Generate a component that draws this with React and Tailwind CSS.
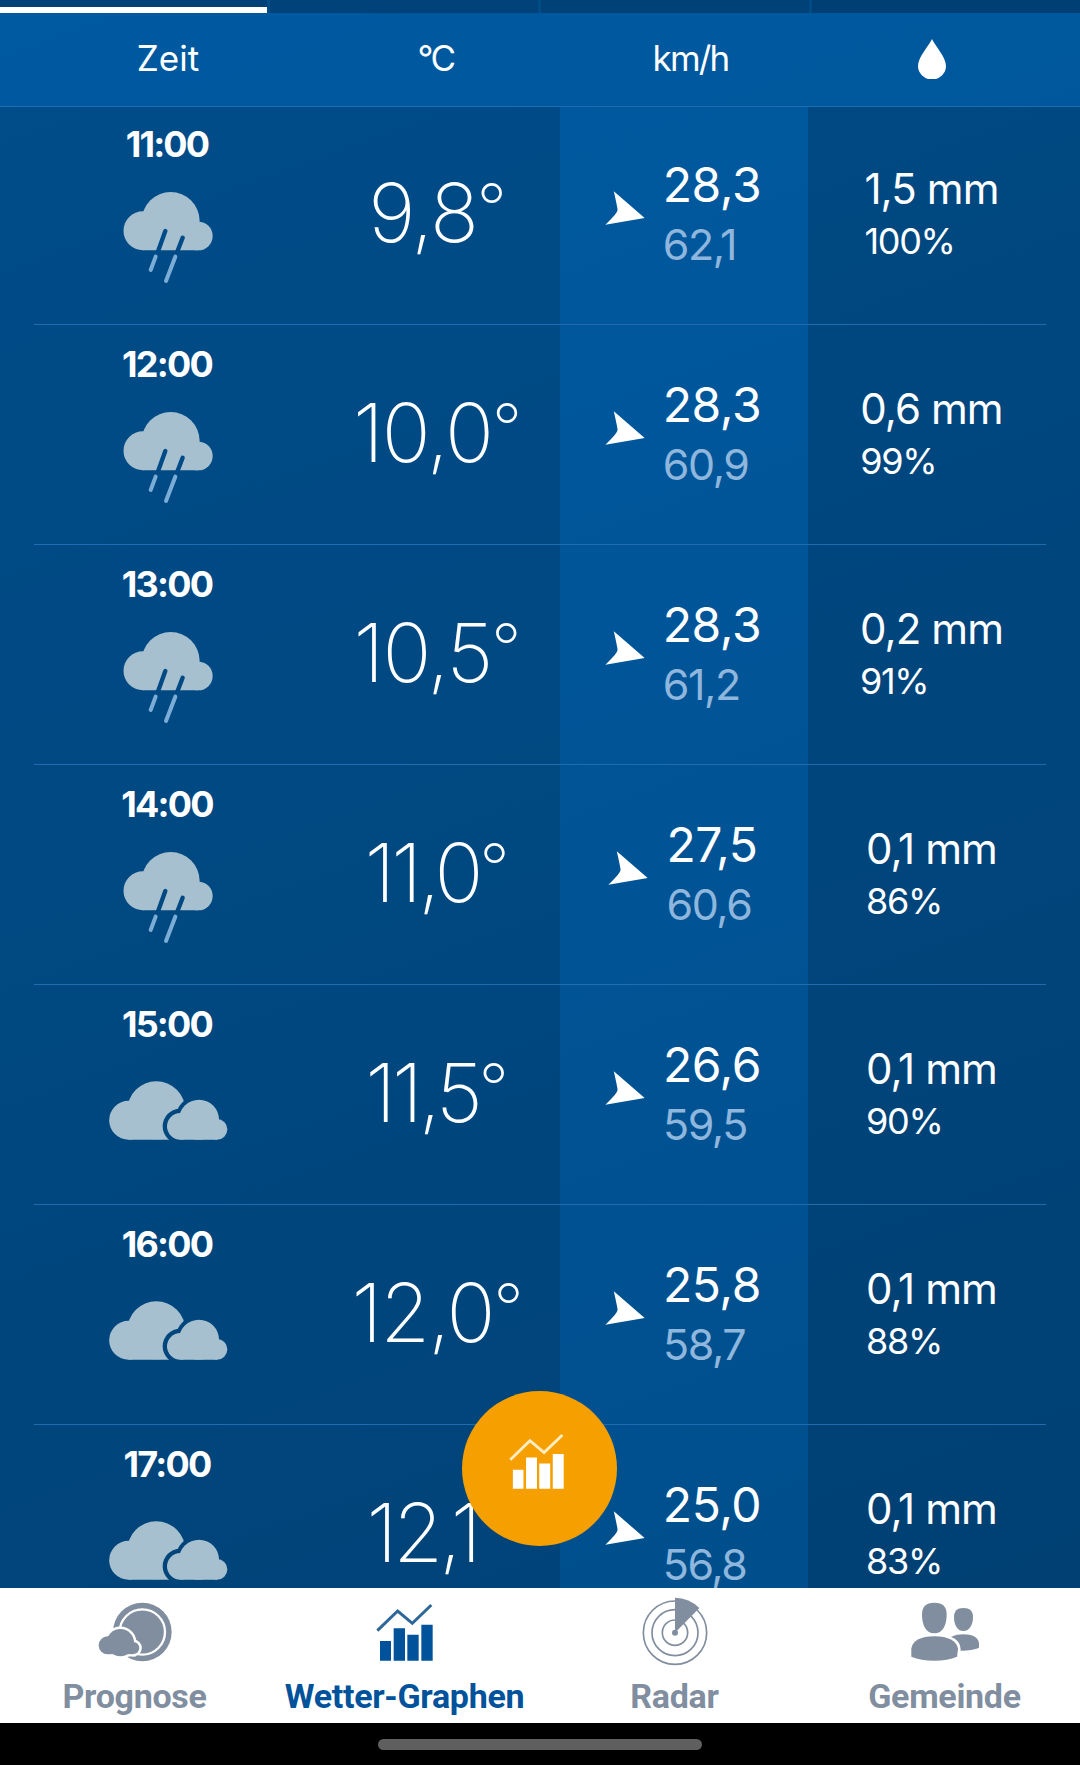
import { useId } from 'react';
import clsx from 'clsx';

const HOURS = [
    { time: '11:00', icon: 'rain', temp: '9,8', wind: '28,3', gust: '62,1', rain: '1,5 mm', prob: '100%' },
    { time: '12:00', icon: 'rain', temp: '10,0', wind: '28,3', gust: '60,9', rain: '0,6 mm', prob: '99%' },
    { time: '13:00', icon: 'rain', temp: '10,5', wind: '28,3', gust: '61,2', rain: '0,2 mm', prob: '91%' },
    { time: '14:00', icon: 'rain', temp: '11,0', tight: true, wind: '27,5', gust: '60,6', rain: '0,1 mm', prob: '86%' },
    { time: '15:00', icon: 'cloudy', temp: '11,5', tight: true, wind: '26,6', gust: '59,5', rain: '0,1 mm', prob: '90%' },
    { time: '16:00', icon: 'cloudy', temp: '12,0', wind: '25,8', gust: '58,7', rain: '0,1 mm', prob: '88%' },
    { time: '17:00', icon: 'cloudy', temp: '12,1', tight: true, wind: '25,0', gust: '56,8', rain: '0,1 mm', prob: '83%' },
];

function RainIcon() {
    const id = useId();
    return (
        <svg className="mt-[28px] h-[92px] w-[90px]" viewBox="100 66 270 276">
            <mask id={id} maskUnits="userSpaceOnUse" x="90" y="50" width="300" height="300">
                <rect x="90" y="50" width="300" height="300" fill="#fff" />
                <path d="M227 183 203 250M279 203 261 250" stroke="#000" strokeWidth="13" strokeLinecap="round" />
            </mask>
            <g fill="#a6c0cf" mask={`url(#${id})`}>
                <circle cx="160" cy="182.500" r="58.500" />
                <circle cx="243" cy="153" r="87" />
                <circle cx="326" cy="198" r="43" />
                <path d="M160 170H326V241H160z" />
            </g>
            <path d="M198 260 183 300M257 260 229 333" stroke="#7badd6" strokeWidth="12" strokeLinecap="round" />
        </svg>
    );
}

function CloudyIcon() {
    const id = useId();
    return (
        <svg className="mt-[37px] h-[59px] w-[119px]" viewBox="56 64 357 177">
            <mask id={id} maskUnits="userSpaceOnUse" x="40" y="50" width="400" height="200">
                <rect x="40" y="50" width="400" height="200" fill="#fff" />
                <g>
                    <circle cx="270" cy="200" r="53" />
                    <circle cx="326" cy="180" r="72" />
                    <path d="M270 190H400V250H270z" />
                </g>
            </mask>
            <g fill="#a6c0cf">
                <g mask={`url(#${id})`}>
                    <circle cx="115" cy="181.500" r="58.500" />
                    <circle cx="198" cy="152" r="87" />
                    <path d="M115 170H290V240H115z" />
                </g>
                <circle cx="270" cy="200" r="40" />
                <circle cx="326" cy="180" r="60" />
                <circle cx="380" cy="209" r="31" />
                <path d="M270 195H380V240H270z" />
            </g>
        </svg>
    );
}

function WindArrow() {
    return (
        <svg className="mt-[86px] h-[34px] w-[40px] shrink-0" viewBox="801 94 118 102" preserveAspectRatio="none" fill="#fff">
            <path d="M827 95 918 175 802 195Q838 160 838 150Q838 145 827 95z" />
        </svg>
    );
}

function DropIcon() {
    return (
        <svg className="h-[40px] w-[28px]" viewBox="0 0 28 40" fill="#fff">
            <path d="M14 0C16.500 6 28 18 28 27a14 13.500 0 0 1-28 0C0 18 11.500 6 14 0z" />
        </svg>
    );
}

function GraphIcon({ className, line, bars }) {
    return (
        <svg className={className} viewBox="318 68 174 174">
            <path d="M322 151 383 92 427 129 484 74" fill="none" stroke={line} strokeWidth="9" />
            <path d="M330 182h33v59h-33zM371 144h34v97h-34zM412 163h34v78h-34zM454 133h34v108h-34z" fill={bars} />
        </svg>
    );
}

function ForecastIcon() {
    return (
        <svg className="h-[60px] w-[74px]" viewBox="110 67 222 180" fill="currentColor">
            <circle cx="243" cy="157" r="88" />
            <circle cx="243" cy="157" r="68" fill="none" stroke="#fff" strokeWidth="7" />
            <g stroke="#fff" strokeWidth="15">
                <circle cx="139" cy="197" r="27" />
                <circle cx="177" cy="189" r="41" />
                <circle cx="216" cy="205" r="18" />
                <path d="M139 195H216V223H139z" />
            </g>
            <circle cx="139" cy="197" r="27" />
            <circle cx="177" cy="189" r="41" />
            <circle cx="216" cy="205" r="18" />
            <path d="M139 195H216V223.500H139z" />
        </svg>
    );
}

function RadarIcon() {
    return (
        <svg className="h-[70px] w-[66px]" viewBox="124 52 198 210" fill="none" stroke="currentColor" strokeWidth="5">
            <circle cx="223" cy="159" r="95" />
            <circle cx="223" cy="159" r="69" />
            <circle cx="223" cy="159" r="38" />
            <circle cx="223" cy="159" r="9" fill="currentColor" stroke="none" />
            <path d="M223 159V54A105 105 0 0 1 296 85z" fill="currentColor" stroke="none" />
        </svg>
    );
}

function CommunityIcon() {
    return (
        <svg className="h-[60px] w-[70px]" viewBox="207 67 210 180" fill="currentColor">
            <path d="M280 69C306 69 317 81 317 105C317 136 305 161 280 161S243 136 243 105C243 81 254 69 280 69z" />
            <path d="M280 170C322 170 347 184 351 207L348 231C330 239 306 243 280 243S230 239 211 231V207C214 184 238 170 280 170z" />
            <path d="M367 85C387 85 396 95 396 112C396 135 386 154 367 154S339 135 339 112C339 95 348 85 367 85z" />
            <path d="M330 172C341 166 354 164 367 164C394 164 412 174 414 190V204C402 210 382 213 359 213C359 193 351 180 330 172z" />
        </svg>
    );
}

function HourRow({ hour }) {
    return (
        <div className="mx-[34px] flex h-[220px] shrink-0 border-b border-[#1d6db0] text-white">
            <div className="flex w-[268px] flex-col items-center pt-[19px]">
                <span className="pr-[2px] text-[36px] leading-[40px] font-bold tracking-[-1.8px]">{hour.time}</span>
                {hour.icon === 'rain' ? <RainIcon /> : <CloudyIcon />}
            </div>
            <div
                className={clsx(
                    'flex w-[258px] items-start justify-center pt-[58px] text-[81px] leading-[100px] font-extralight',
                    hour.tight ? 'pl-[8px] tracking-[-4px]' : 'pl-[11px] tracking-[-2px]'
                )}
            >
                <span>{hour.temp}</span>
                <span className="-mt-[6px] text-[66px]">°</span>
            </div>
            <div className="flex w-[248px] justify-center gap-[18px] pr-[2px]">
                <WindArrow />
                <div className="pt-[51px]">
                    <div className="text-[48px] leading-[58px] tracking-[-0.4px]">{hour.wind}</div>
                    <div className="mt-[8px] text-[43px] leading-[44px] tracking-[-1.4px] text-[#8fb6dc]">{hour.gust}</div>
                </div>
            </div>
            <div className="flex w-[238px] justify-center pt-[58px] pl-[9px]">
                <div className="whitespace-nowrap">
                    <div className="text-[42px] leading-[52px] tracking-[-0.9px]">{hour.rain}</div>
                    <div className="mt-[2px] text-[36px] leading-[48px] tracking-[-1.3px]">{hour.prob}</div>
                </div>
            </div>
        </div>
    );
}

function NavItem({ label, active, children }) {
    return (
        <button className={clsx('flex flex-col items-center', active ? 'text-[#00529b]' : 'text-[#808e9f]')}>
            <span className="flex h-[88px] items-center pr-[1px]">{children}</span>
            <span className="pr-[1px] font-[Roboto] text-[34px] leading-[40px] font-bold tracking-[-0.3px]">{label}</span>
        </button>
    );
}

export default function App() {
    return (
        <div className="relative flex h-[1765px] w-[1080px] flex-col overflow-hidden bg-black font-[Inter,sans-serif]">
            <div className="flex h-[1588px] flex-col overflow-hidden bg-[linear-gradient(160deg,#005aa1_0%,#00569a_35%,#004e8b_100%)]">
                {/* Tab indicator */}
                <div className="grid h-[13px] shrink-0 grid-cols-[267px_1fr_1fr_1fr] gap-[3px] bg-[#004c86]">
                    <div className="border-b-[6px] border-white bg-[#004178]" />
                    <div className="bg-[#004279]" />
                    <div className="bg-[#004177]" />
                    <div className="bg-[#003f74]" />
                </div>

                {/* Column titles */}
                <div className="relative flex h-[94px] shrink-0 items-center border-b border-[#1d6db0] px-[34px] pb-[2px] text-[35px] text-white">
                    <div className="w-[268px] text-center">Zeit</div>
                    <div className="w-[258px] pl-[9px] text-center tracking-[-2.5px]">°C</div>
                    <div className="w-[248px] pl-[13px] text-center tracking-[-1.8px]">km/h</div>
                    <div className="flex w-[238px] justify-center pt-[1px] pl-[10px]"><DropIcon /></div>
                </div>

                {/* Hourly list */}
                <div className="relative flex min-h-0 flex-1 overflow-hidden">
                    <div className="absolute inset-y-0 left-0 w-[560px] bg-black/14" />
                    <div className="absolute inset-y-0 right-0 w-[272px] bg-black/17" />
                    <div className="relative -mt-[2px] flex flex-col">
                        {HOURS.map((hour) => <HourRow key={hour.time} hour={hour} />)}
                    </div>
                </div>
            </div>

            <nav className="grid h-[135px] shrink-0 grid-cols-4 bg-white">
                <NavItem label="Prognose"><ForecastIcon /></NavItem>
                <NavItem label="Wetter-Graphen" active>
                    <GraphIcon className="h-[58px] w-[58px]" line="#2f6799" bars="#00529b" />
                </NavItem>
                <NavItem label="Radar"><RadarIcon /></NavItem>
                <NavItem label="Gemeinde"><CommunityIcon /></NavItem>
            </nav>

            <div className="flex flex-1 justify-center pt-[16px]">
                <div className="h-[11px] w-[324px] rounded-full bg-[#5f5f5f]" />
            </div>

            <button className="absolute top-[1391px] left-[462px] flex h-[155px] w-[155px] items-center justify-center rounded-full bg-[#f59f00] pr-[5px] pb-[16px]">
                <GraphIcon className="h-[56px] w-[56px]" line="#ffedc0" bars="#fff" />
            </button>
        </div>
    );
}
